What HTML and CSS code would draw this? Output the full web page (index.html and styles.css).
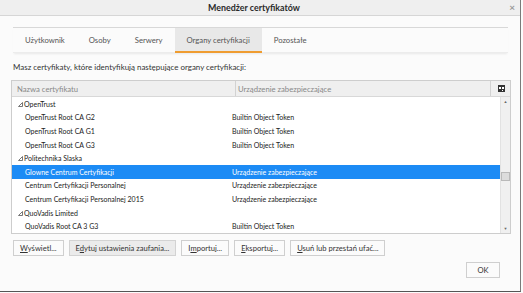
FILE: index.html
```html
<!DOCTYPE html>
<html lang="pl">
<head>
<meta charset="utf-8">
<link rel="stylesheet" href="styles.css">
</head>
<body>
<div class="window">
  <div class="titlebar">
    <span class="title">Menedżer certyfikatów</span>
    <span class="close">×</span>
  </div>
  <div class="content">
    <div class="tabs">
      <div class="tab">Użytkownik</div>
      <div class="tab">Osoby</div>
      <div class="tab">Serwery</div>
      <div class="tab active">Organy certyfikacji</div>
      <div class="tab">Pozostałe</div>
    </div>
    <p class="desc">Masz certyfikaty, które identyfikują następujące organy certyfikacji:</p>
    <div class="tree">
      <div class="tree-head">
        <div class="hcol hcol1">Nazwa certyfikatu</div>
        <div class="hcol hcol2">Urządzenie zabezpieczające</div>
        <div class="hcol hpick">
          <svg width="7" height="7" viewBox="0 0 7 7"><rect x="0" y="0" width="7" height="7" fill="#333"/><rect x="1" y="2" width="2" height="2" fill="#fff"/><rect x="4" y="2" width="2" height="2" fill="#fff"/><rect x="4" y="5" width="1" height="1" fill="#fff"/></svg>
        </div>
      </div>
      <div class="tree-body">
        <div class="rows">
          <div class="row group"><span class="c1"><svg class="twisty" width="5" height="5" viewBox="0 0 5 5"><polygon points="4.5,0.5 4.5,4.5 0.5,4.5" fill="none" stroke="#555" stroke-width="0.8"/></svg>OpenTrust</span><span class="c2"></span></div>
          <div class="row"><span class="c1 child">OpenTrust Root CA G2</span><span class="c2">Builtin Object Token</span></div>
          <div class="row"><span class="c1 child">OpenTrust Root CA G1</span><span class="c2">Builtin Object Token</span></div>
          <div class="row"><span class="c1 child">OpenTrust Root CA G3</span><span class="c2">Builtin Object Token</span></div>
          <div class="row group"><span class="c1"><svg class="twisty" width="5" height="5" viewBox="0 0 5 5"><polygon points="4.5,0.5 4.5,4.5 0.5,4.5" fill="none" stroke="#555" stroke-width="0.8"/></svg>Politechnika Slaska</span><span class="c2"></span></div>
          <div class="row selected"><span class="c1 child">Glowne Centrum Certyfikacji</span><span class="c2">Urządzenie zabezpieczające</span></div>
          <div class="row"><span class="c1 child">Centrum Certyfikacji Personalnej</span><span class="c2">Urządzenie zabezpieczające</span></div>
          <div class="row"><span class="c1 child">Centrum Certyfikacji Personalnej 2015</span><span class="c2">Urządzenie zabezpieczające</span></div>
          <div class="row group"><span class="c1"><svg class="twisty" width="5" height="5" viewBox="0 0 5 5"><polygon points="4.5,0.5 4.5,4.5 0.5,4.5" fill="none" stroke="#555" stroke-width="0.8"/></svg>QuoVadis Limited</span><span class="c2"></span></div>
          <div class="row"><span class="c1 child">QuoVadis Root CA 3 G3</span><span class="c2">Builtin Object Token</span></div>
        </div>
        <div class="scrollbar">
          <div class="arrow">▲</div>
          <div class="track"><div class="thumb"></div></div>
          <div class="arrow">▼</div>
        </div>
      </div>
    </div>
    <div class="buttons">
      <button class="btn"><u>W</u>yświetl...</button>
      <button class="btn focus">E<u>d</u>ytuj ustawienia zaufania...</button>
      <button class="btn">I<u>m</u>portuj...</button>
      <button class="btn"><u>E</u>ksportuj...</button>
      <button class="btn"><u>U</u>suń lub przestań ufać...</button>
    </div>
    <div class="footer">
      <button class="btn ok">OK</button>
    </div>
  </div>
</div>
</body>
</html>
```

FILE: styles.css
```css
* { box-sizing: border-box; }
html, body { margin: 0; padding: 0; background: #fbfbfb; }
body { font-family: Lato, "Open Sans", sans-serif; color: #333; }

.window {
  width: 521px;
  height: 292px;
  border-right: 1px solid #7a7a7a;
  border-bottom: 1px solid #555;
  background: #fbfbfb;
  display: flex;
  flex-direction: column;
}

.titlebar {
  position: relative;
  height: 16px;
  background: #efefef;
  border-bottom: 1px solid #d6d6d6;
  display: flex;
  justify-content: center;
  align-items: center;
  padding-right: 12px;
}
.title { font-size: 8.9px; font-weight: 700; color: #2a2a2a; }
.close { position: absolute; right: 5px; top: 1px; font-size: 10px; color: #999; font-weight: 700; }

.content { padding: 0 10px 0 11px; flex: 1; display: flex; flex-direction: column; }

.tabs {
  margin: 11px 2px 0 2px;
  border-top: 1px solid #d8d8d8;
  height: 26px;
  display: flex;
  box-shadow: 0 2px 2px -1px rgba(0,0,0,0.08);
  border-bottom: 1px solid #ececec;
}
.tab {
  padding: 0 12px;
  font-size: 7.7px;
  color: #555;
  display: flex;
  align-items: center;
  height: 24px;
}
.tab.active {
  background: #e8e8e8;
  border-bottom: 2px solid #ef9c30;
  height: 25px;
  padding-top: 1px;
}

.desc { margin: 8px 0 0 2px; font-size: 7.95px; color: #333; line-height: 13px; }

.tree {
  margin-top: 6px;
  width: 500px;
  border: 1px solid #cdcdcd;
  background: #fff;
}
.tree-head {
  display: grid;
  grid-template-columns: 223px 255px 1fr;
  height: 16px;
  background: #efefef;
  border-bottom: 1px solid #d8d8d8;
}
.hcol { font-size: 7.7px; color: #888; display: flex; align-items: center; }
.hcol1 { padding-left: 5px; }
.hcol2 { border-left: 1px solid #d2d2d2; padding-left: 2px; }
.hpick { border-left: 1px solid #d2d2d2; justify-content: center; padding-left: 1px; }

.tree-body { display: flex; height: 136px; }
.rows { flex: 1; }
.row {
  height: 13.6px;
  display: grid;
  grid-template-columns: 220px 1fr;
  align-items: center;
  font-size: 7px;
  color: #222;
}
.row .c1 { padding-left: 6px; display: flex; align-items: center; white-space: nowrap; }
.row .c1.child { padding-left: 13px; }
.twisty { margin-right: 1px; margin-top: 1px; }
.row.selected { background: #1c8bf5; color: #fff; }

.scrollbar {
  width: 10px;
  background: #f0f0f0;
  border-left: 1px solid #e2e2e2;
  display: flex;
  flex-direction: column;
}
.arrow { height: 9px; font-size: 4px; color: #666; display: flex; align-items: center; justify-content: center; }
.track { flex: 1; padding-top: 66px; }
.thumb { height: 9px; background: #dcdcdc; border: 1px solid #b9b9b9; }

.buttons { display: flex; gap: 5px; margin: 6px 0 0 2px; }
.btn {
  font-family: inherit;
  font-size: 7.6px;
  color: #333;
  height: 16px;
  padding: 0 6px;
  background: #fbfbfb;
  border: 1px solid #cfcfcf;
  border-radius: 0;
  line-height: 14px;
  margin: 0;
}
.btn.focus { background: #ebebeb; border-color: #d3d3d3; }
.footer { display: flex; justify-content: flex-end; margin: 6px 10px 0 0; }
.btn.ok { width: 34px; padding: 0; }
```
